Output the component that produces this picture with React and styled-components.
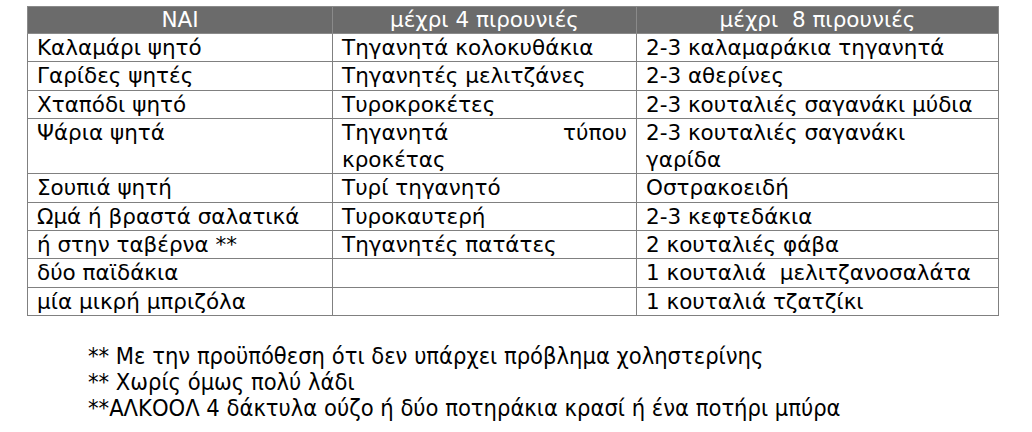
import React from 'react';
import styled, { createGlobalStyle } from 'styled-components';

const rows = [
  ['Καλαμάρι ψητό', 'Τηγανητά κολοκυθάκια', '2-3 καλαμαράκια τηγανητά'],
  ['Γαρίδες ψητές', 'Τηγανητές μελιτζάνες', '2-3 αθερίνες'],
  ['Χταπόδι ψητό', 'Τυροκροκέτες', '2-3 κουταλιές σαγανάκι μύδια'],
  ['Ψάρια ψητά', 'Τηγανητά τύπου κροκέτας', '2-3 κουταλιές σαγανάκι γαρίδα'],
  ['Σουπιά ψητή', 'Τυρί τηγανητό', 'Οστρακοειδή'],
  ['Ωμά ή βραστά σαλατικά', 'Τυροκαυτερή', '2-3 κεφτεδάκια'],
  ['ή στην ταβέρνα **', 'Τηγανητές πατάτες', '2 κουταλιές φάβα'],
  ['δύο παϊδάκια', '', '1 κουταλιά  μελιτζανοσαλάτα'],
  ['μία μικρή μπριζόλα', '', '1 κουταλιά τζατζίκι'],
];

const notes = [
  '** Με την προϋπόθεση ότι δεν υπάρχει πρόβλημα χοληστερίνης',
  '** Χωρίς όμως πολύ λάδι',
  '**ΑΛΚΟΟΛ 4 δάκτυλα ούζο ή δύο ποτηράκια κρασί ή ένα ποτήρι μπύρα',
];

const App = () => {
  return (
    <Page>
      <GlobalStyle />
      <Table>
        <colgroup>
          <col style={{ width: 305 }} />
          <col style={{ width: 304 }} />
          <col style={{ width: 362 }} />
        </colgroup>
        <thead>
          <tr>
            <HeadCell>NAI</HeadCell>
            <HeadCell>μέχρι 4 πιρουνιές</HeadCell>
            <HeadCell>μέχρι  8 πιρουνιές</HeadCell>
          </tr>
        </thead>
        <tbody>
          {rows.map((row, i) => (
            <tr key={i}>
              <Cell $right={5}>{row[0]}</Cell>
              <Cell $right={9} $justify={i === 3}>{row[1]}</Cell>
              <Cell $right={16}>{row[2]}</Cell>
            </tr>
          ))}
        </tbody>
      </Table>
      <Notes>
        {notes.map((n) => (
          <Note key={n}>{n}</Note>
        ))}
      </Notes>
    </Page>
  );
};

const GlobalStyle = createGlobalStyle`
  body {
    margin: 0;
    background: #ffffff;
  }
`;

const Page = styled.div`
  padding: 6px 0 0 27px;
  font-family: "DejaVu Sans", Verdana, sans-serif;
  color: #000;
`;

const Table = styled.table`
  border-collapse: collapse;
  table-layout: fixed;
  width: 971px;
`;

const HeadCell = styled.th`
  background: #6b6b6b;
  color: #ffffff;
  font-weight: normal;
  font-size: 21.5px;
  line-height: 26px;
  height: 26px;
  padding: 0;
  border: 1px solid #8a8a8a;
  text-align: center;
  white-space: pre;
`;

const Cell = styled.td`
  font-size: 21.5px;
  line-height: 27.3px;
  padding: 0 ${(p) => p.$right}px 0 9px;
  border: 1px solid #808080;
  vertical-align: top;
  white-space: pre-wrap;
  text-align: ${(p) => (p.$justify ? 'justify' : 'left')};
  text-align-last: left;
`;

const Notes = styled.div`
  padding: 27px 0 0 61px;
`;

const Note = styled.div`
  font-family: "DejaVu Sans Condensed", "DejaVu Sans", sans-serif;
  font-size: 23.5px;
  line-height: 26px;
`;

export default App;
